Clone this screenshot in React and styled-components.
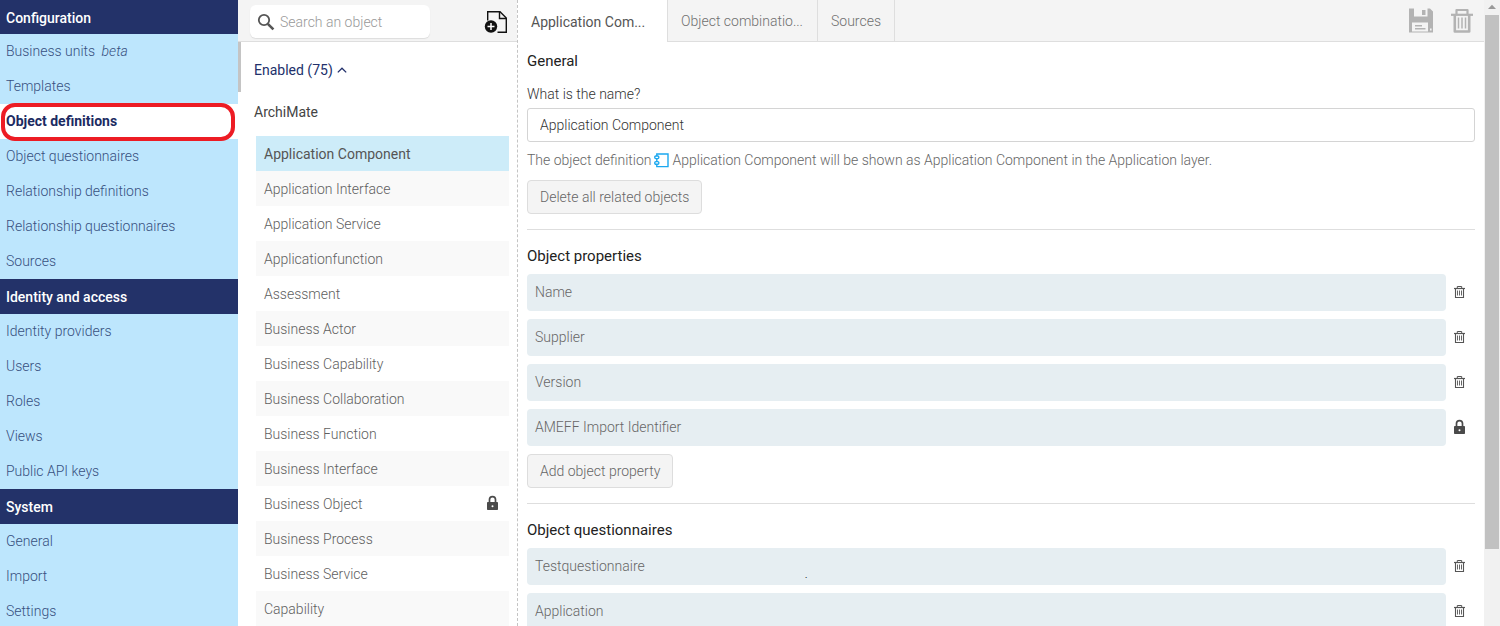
import React, { useState } from 'react';
import styled, { createGlobalStyle } from 'styled-components';

const GlobalStyle = createGlobalStyle`
	* {
		box-sizing: border-box;
	}

	body {
		margin: 0;
		background-color: white;
		color: #666666;
		font-family: Roboto, 'Liberation Sans', sans-serif;
		font-size: 14px;
		font-weight: 300;
		line-height: 20px;
	}

	button,
	input {
		font: inherit;
		color: inherit;
	}

	svg {
		display: block;
		flex: none;
	}
`;

const menu = [
	{
		title: 'Configuration',
		items: [
			'Business units',
			'Templates',
			'Object definitions',
			'Object questionnaires',
			'Relationship definitions',
			'Relationship questionnaires',
			'Sources',
		],
	},
	{
		title: 'Identity and access',
		items: ['Identity providers', 'Users', 'Roles', 'Views', 'Public API keys'],
	},
	{ title: 'System', items: ['General', 'Import', 'Settings'] },
];

const objects = [
	'Application Component',
	'Application Interface',
	'Application Service',
	'Applicationfunction',
	'Assessment',
	'Business Actor',
	'Business Capability',
	'Business Collaboration',
	'Business Function',
	'Business Interface',
	'Business Object',
	'Business Process',
	'Business Service',
	'Capability',
];

const Page = styled.div`
	display: flex;
	height: 100vh;
	overflow: hidden;
`;

const Sidebar = styled.nav`
	flex: none;
	width: 238px;
	background-color: #bde6fd;
	overflow: hidden;
`;

const MenuTitle = styled.h2`
	margin: 0;
	height: ${props => (props.$first ? '34px' : '35px')};
	padding: 0 6px;
	background-color: #233269;
	color: white;
	font-size: 14px;
	font-weight: 500;
	line-height: 36px;
`;

const MenuLink = styled.a`
	position: relative;
	display: block;
	height: 35px;
	padding: 0 6px;
	line-height: 35px;
	text-decoration: none;
	color: ${props => (props.$active ? '#1c2b62' : '#37507f')};
	font-weight: ${props => (props.$active ? 700 : 300)};
	background-color: ${props => (props.$active ? 'white' : 'transparent')};

	em {
		margin-left: 3px;
	}
`;

const Highlight = styled.span`
	position: absolute;
	inset: -1px 3px -2px 1px;
	border: 4px solid #ed1c24;
	border-radius: 14px;
`;

const ListPanel = styled.section`
	flex: none;
	width: 280px;
	border-right: 1px dashed #c4c4c4;
	overflow: hidden;
`;

const Toolbar = styled.div`
	display: flex;
	height: 42px;
	background-color: #f4f4f4;
	border-bottom: 1px solid #dedede;
`;

const SearchBar = styled(Toolbar)`
	align-items: center;
	justify-content: space-between;
	padding: 2px 9px 0 12px;
`;

const SearchBox = styled.label`
	display: flex;
	align-items: center;
	gap: 5px;
	width: 180px;
	height: 33px;
	padding: 0 7px;
	background-color: white;
	border-radius: 6px;
	box-shadow: 0 1px 1px #dddddd;

	input {
		width: 100%;
		min-width: 0;
		padding: 0;
		border: 0;
		outline: none;
		background: none;
	}

	input::placeholder {
		color: #999999;
	}
`;

const IconButton = styled.button`
	display: flex;
	flex: none;
	padding: 0;
	border: 0;
	background: none;
	cursor: pointer;
`;

const ListBody = styled.div`
	display: flex;
	padding-right: 8px;
`;

const ListThumb = styled.div`
	flex: none;
	width: 3px;
	height: 50px;
	background-color: #c4c4c4;
`;

const ListContent = styled.div`
	flex: 1;
	padding: 18px 0 0 13px;
`;

const GroupToggle = styled.button`
	display: flex;
	align-items: center;
	gap: 4px;
	padding: 0;
	border: 0;
	background: none;
	color: #22306b;
	font-weight: 400;
	cursor: pointer;
`;

const GroupTitle = styled.h3`
	margin: 22px 0 14px;
	color: #444444;
	font-size: 14px;
	font-weight: 400;
`;

const ObjectList = styled.ul`
	margin: 0 0 0 2px;
	padding: 0;
	list-style: none;
`;

const ObjectItem = styled.li`
	display: flex;
	align-items: center;
	justify-content: space-between;
	height: 35px;
	padding: 0 10px 0 8px;
	background-color: ${props => (props.$active ? '#cdecf9' : 'white')};
	font-weight: ${props => (props.$active ? 400 : 300)};
	color: ${props => (props.$active ? '#555555' : '#606060')};

	&:nth-child(even) {
		background-color: #f9f9f9;
	}
`;

const Main = styled.main`
	flex: 1;
	min-width: 0;
	overflow: hidden;
`;

const Tab = styled.button`
	height: ${props => (props.$active ? '42px' : '41px')};
	padding: ${props => (props.$active ? '2px 13px 0' : '0 13px')};
	width: ${props => (props.$wide ? '150px' : 'auto')};
	border: 0;
	border-right: 1px solid #dedede;
	background-color: ${props => (props.$active ? 'white' : 'transparent')};
	font-weight: ${props => (props.$active ? 400 : 300)};
	color: ${props => (props.$active ? '#555555' : '#707070')};
	text-align: left;
	white-space: nowrap;
	cursor: pointer;
`;

const Actions = styled.div`
	display: flex;
	align-items: center;
	gap: 17px;
	margin-left: auto;
	padding-right: 10px;
`;

const Content = styled.div`
	padding: 9px 9px 0;
`;

const Section = styled.section`
	& + & {
		margin-top: 15px;
		padding-top: 16px;
		border-top: 1px solid #dedede;
	}
`;

const Heading = styled.h2`
	margin: 0 0 8px;
	color: #222222;
	font-size: 15px;
	font-weight: 400;
`;

const FieldLabel = styled.label`
	display: block;
	margin: 13px 0 4px;
	color: #333333;
`;

const TextInput = styled.input`
	display: block;
	width: 100%;
	height: 34px;
	padding: 0 12px;
	border: 1px solid #d4d4d4;
	border-radius: 3px;
	color: #333333;
`;

const Hint = styled.p`
	display: flex;
	align-items: center;
	gap: 3px;
	margin: 8px 0 10px;
	white-space: nowrap;
`;

const ActionButton = styled.button`
	display: block;
	height: 34px;
	padding: 0 12px;
	border: 1px solid #dddddd;
	border-radius: 4px;
	background-color: #f4f4f4;
	cursor: pointer;
`;

const PropertyRow = styled.div`
	display: flex;
	align-items: center;
	gap: 7px;
	margin-bottom: 8px;
	padding-right: 9px;
`;

const Property = styled.div`
	position: relative;
	flex: 1;
	height: 37px;
	padding: 0 8px;
	border-radius: 4px;
	background-color: #e6eef2;
	line-height: 37px;
`;

const Mark = styled.span`
	position: absolute;
	left: 30%;
	top: 8px;
	padding-left: 2px;
	color: black;
	font-size: 12px;
`;

const ScrollTrack = styled.div`
	display: flex;
	flex: none;
	flex-direction: column;
	align-items: center;
	width: 16px;
	background-color: #f1f1f1;
`;

const ScrollThumb = styled.div`
	width: 14px;
	height: 534px;
	background-color: #c1c1c1;
`;

function SearchIcon() {
	return (
		<svg width='18' height='18' viewBox='0 0 18 18' fill='none' stroke='#555555'>
			<circle cx='7' cy='7' r='5.2' strokeWidth='1.8' />
			<path d='M10.8 10.8L16.4 16.4' strokeWidth='2.6' />
		</svg>
	);
}

function AddFileIcon() {
	return (
		<svg width='24' height='24' viewBox='0 0 24 24' fill='none' stroke='#111111'>
			<path d='M3.7 10.5V1.7H16L22.3 8V22.3H13.5' strokeWidth='1.4' />
			<path d='M15.5 2V8.5H22' strokeWidth='1.4' />
			<circle cx='7' cy='16.5' r='6.2' fill='#111111' stroke='none' />
			<path d='M7 13V20M3.5 16.5H10.5' stroke='white' strokeWidth='1.5' />
		</svg>
	);
}

function SaveIcon() {
	return (
		<svg width='25' height='25' viewBox='0 0 25 25' fill='#b3b3b3'>
			<path
				fillRule='evenodd'
				d='M1 0.5H6V8.5H19.5V0.5H22L25 3.5V24.5H1ZM4 14.5V23.5H20V14.5ZM22 20.5V22.5H23.6V20.5Z'
			/>
			<path d='M14 2H17.5V7H14ZM7 17H14V18.4H7ZM7 20H17.5V21.4H7Z' />
		</svg>
	);
}

function BigTrashIcon() {
	return (
		<svg width='24' height='26' viewBox='0 0 24 26' fill='none' stroke='#b3b3b3'>
			<path d='M1 6.8H23' strokeWidth='2.2' />
			<path d='M6.5 6V2H17.5V6' strokeWidth='2.2' strokeLinejoin='round' />
			<path d='M4.8 7V23.5H19.2V7' strokeWidth='2.6' strokeLinejoin='round' />
			<path d='M8.5 9.5V20.5M12 9.5V20.5M15.5 9.5V20.5' strokeWidth='1.5' />
		</svg>
	);
}

function TrashIcon() {
	return (
		<svg width='13' height='16' viewBox='0 0 13 16' fill='none' stroke='#555555'>
			<path d='M1 3.5H12' strokeWidth='1.2' />
			<path d='M4.3 3V1.5H8.7V3' />
			<path d='M2.5 3.5V12.5H10.5V3.5' strokeWidth='1.1' />
			<path d='M4.5 5.5V10.5M6.5 5.5V10.5M8.5 5.5V10.5' strokeWidth='0.9' />
		</svg>
	);
}

function LockIcon() {
	return (
		<svg width='13' height='18' viewBox='0 0 13 18'>
			<path d='M3.5 8V4.6A3 3 0 0 1 9.5 4.6V8' fill='none' stroke='#4a4a4a' strokeWidth='1.7' />
			<rect x='1' y='7' width='11' height='8' rx='0.8' fill='#4a4a4a' />
			<circle cx='6.5' cy='11.2' r='1' fill='white' />
		</svg>
	);
}

function ComponentIcon() {
	return (
		<svg width='15' height='15' viewBox='0 0 15 15' fill='none' stroke='#1ba8f0' strokeWidth='1.4'>
			<path d='M2.8 3V1H14V13.6H2.8V11.6M2.8 6V8.5' />
			<rect x='0.8' y='3' width='4' height='2.6' rx='1' />
			<rect x='0.8' y='8.6' width='4' height='2.6' rx='1' />
		</svg>
	);
}

function PropertyItem({ name, locked, mark }) {
	return (
		<PropertyRow>
			<Property>
				{name}
				{mark && <Mark>.</Mark>}
			</Property>
			{locked ? (
				<LockIcon />
			) : (
				<IconButton aria-label={`Delete ${name}`}>
					<TrashIcon />
				</IconButton>
			)}
		</PropertyRow>
	);
}

function App() {
	const [name, setName] = useState('Application Component');

	return (
		<Page>
			<GlobalStyle />
			<Sidebar>
				{menu.map((group, i) => (
					<div key={group.title}>
						<MenuTitle $first={i === 0}>{group.title}</MenuTitle>
						{group.items.map(item => (
							<MenuLink key={item} href='#' $active={item === 'Object definitions'}>
								{item}
								{item === 'Business units' && <em> beta</em>}
								{item === 'Object definitions' && <Highlight />}
							</MenuLink>
						))}
					</div>
				))}
			</Sidebar>

			<ListPanel>
				<SearchBar>
					<SearchBox>
						<SearchIcon />
						<input type='text' placeholder='Search an object' aria-label='Search an object' />
					</SearchBox>
					<IconButton aria-label='Add object'>
						<AddFileIcon />
					</IconButton>
				</SearchBar>
				<ListBody>
					<ListThumb />
					<ListContent>
						<GroupToggle>
							Enabled (75)
							<svg width='10' height='6' viewBox='0 0 10 6' fill='none' stroke='#22306b' strokeWidth='1.3'>
								<path d='M0.8 5.4L5 1.2L9.2 5.4' />
							</svg>
						</GroupToggle>
						<GroupTitle>ArchiMate</GroupTitle>
						<ObjectList>
							{objects.map((object, i) => (
								<ObjectItem key={object} $active={i === 0}>
									{object}
									{object === 'Business Object' && <LockIcon />}
								</ObjectItem>
							))}
						</ObjectList>
					</ListContent>
				</ListBody>
			</ListPanel>

			<Main>
				<Toolbar>
					<Tab $active $wide>
						Application Com...
					</Tab>
					<Tab $wide>Object combinatio...</Tab>
					<Tab>Sources</Tab>
					<Actions>
						<IconButton aria-label='Save'>
							<SaveIcon />
						</IconButton>
						<IconButton aria-label='Delete'>
							<BigTrashIcon />
						</IconButton>
					</Actions>
				</Toolbar>
				<Content>
					<Section>
						<Heading>General</Heading>
						<FieldLabel htmlFor='name'>What is the name?</FieldLabel>
						<TextInput id='name' type='text' value={name} onChange={e => setName(e.target.value)} />
						<Hint>
							The object definition
							<ComponentIcon />
							Application Component will be shown as Application Component in the Application layer.
						</Hint>
						<ActionButton>Delete all related objects</ActionButton>
					</Section>
					<Section>
						<Heading>Object properties</Heading>
						<PropertyItem name='Name' />
						<PropertyItem name='Supplier' />
						<PropertyItem name='Version' />
						<PropertyItem name='AMEFF Import Identifier' locked />
						<ActionButton>Add object property</ActionButton>
					</Section>
					<Section>
						<Heading>Object questionnaires</Heading>
						<PropertyItem name='Testquestionnaire' mark />
						<PropertyItem name='Application' />
					</Section>
				</Content>
			</Main>

			<ScrollTrack>
				<svg width='16' height='15' viewBox='0 0 16 15'>
					<path d='M4 9L8 4.8L12 9Z' fill='#999999' />
				</svg>
				<ScrollThumb />
			</ScrollTrack>
		</Page>
	);
}

export default App;
